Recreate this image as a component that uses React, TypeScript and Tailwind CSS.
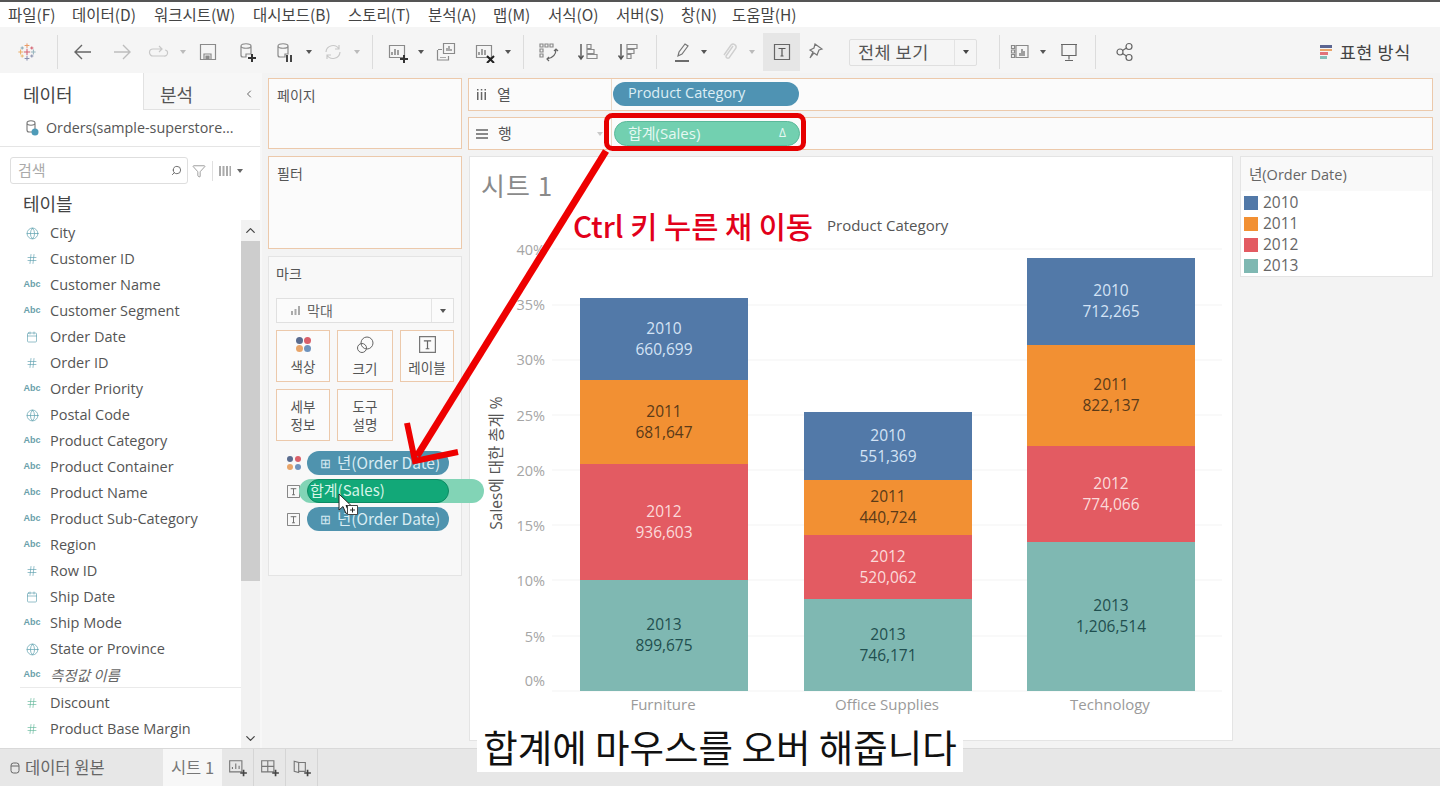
import React from "react";
import { Globe, Hash, Calendar, Search, Filter, ChevronLeft, ChevronUp, ChevronDown } from "lucide-react";

const KR = { fontFamily: '"Noto Sans CJK KR","Noto Sans",sans-serif' };
const kr = 'font-["Noto_Sans_CJK_KR",sans-serif]';
const os = 'font-["Open_Sans","Noto_Sans_CJK_KR",sans-serif]';

const menu: [string, number][] = [
  ["파일(F)", 64], ["데이터(D)", 82], ["워크시트(W)", 99], ["대시보드(B)", 95], ["스토리(T)", 80], ["분석(A)", 65],
  ["맵(M)", 55], ["서식(O)", 68], ["서버(S)", 65], ["창(N)", 51], ["도움말(H)", 80],
];

const G = "#8a8a8a";
const Svg = ({ children, w = 22, h = 22 }: { children: React.ReactNode; w?: number; h?: number }) => (
  <svg width={w} height={h} viewBox={`0 0 ${w} ${h}`} fill="none" stroke={G} strokeWidth="1.2">{children}</svg>
);
const Caret = ({ c = "#777" }: { c?: string }) => <div className="h-0 w-0 border-x-[3px] border-t-[4px] border-x-transparent" style={{ borderTopColor: c }} />;
const Slot = ({ w, children, className = "" }: { w: number; children?: React.ReactNode; className?: string }) => (
  <div className={"flex h-full shrink-0 items-center justify-center " + className} style={{ width: w }}>{children}</div>
);
const Sep = ({ w }: { w: number }) => <Slot w={w}><div className="h-[34px] w-px bg-[#dcdcdc]" /></Slot>;
const Bars = () => (<g stroke="#666"><path d="M6 14v-3M9 14V8M12 14v-5" /></g>);

const Logo = () => {
  const pts: [number, number, string, number][] = [
    [11, 3, "#e8762c", 3], [11, 19, "#5b6591", 3], [3, 11, "#eb912b", 3], [19, 11, "#7099a6", 3], [11, 11, "#c72035", 4],
    [5, 6, "#59879b", 2], [17, 6, "#c72035", 2], [5, 16, "#e8a33a", 2], [17, 16, "#5b6591", 2],
  ];
  return (
    <div className="scale-[0.8] opacity-70">
      <Svg>
        {pts.map(([x, y, c, s], i) => (
          <path key={i} d={`M${x - s} ${y}h${2 * s}M${x} ${y - s}v${2 * s}`} stroke={c} strokeWidth="1.3" />
        ))}
      </Svg>
    </div>
  );
};

function Toolbar() {
  return (
    <div className="flex h-[46px] items-center bg-[#f5f5f5] pt-[4px]">
      <Slot w={54}><Logo /></Slot>
      <Sep w={6} />
      <Slot w={46}><Svg><path d="M19 11H3M10 4l-7 7 7 7" stroke="#666" strokeWidth="1.4" /></Svg></Slot>
      <Slot w={32}><Svg><path d="M3 11h16M12 4l7 7-7 7" stroke="#bdbdbd" strokeWidth="1.4" /></Svg></Slot>
      <Slot w={40}><Svg><path d="M15 8H6a3 3 0 0 0 0 7h11a3 3 0 0 0 1-6M12 5l3 3-3 3" stroke="#c8c8c8" /></Svg></Slot>
      <Slot w={10}><Caret c="#bbb" /></Slot>
      <Slot w={40}><Svg><path d="M3.500 3.500h15v15h-15zM7 18v-5h7v5" /><path d="M9 15h3v3H9z" fill={G} /></Svg></Slot>
      <Slot w={40}><Svg><path d="M4 5c0-3 10-3 10 0v8H9v3H6c-2 0-2-1-2-2zM4 5c0 3 10 3 10 0" /><path d="M11 17h8M15 13v8" stroke="#333" strokeWidth="2" /></Svg></Slot>
      <Slot w={34}><Svg><path d="M4 5c0-3 10-3 10 0v8h-3v3H6c-2 0-2-1-2-2zM4 5c0 3 10 3 10 0" /><path d="M13 14v7M17 14v7" stroke="#444" strokeWidth="2" /></Svg></Slot>
      <Slot w={14}><Caret c="#555" /></Slot>
      <Slot w={34}><Svg><path d="M4 11a7 7 0 0 1 13-3M18 11a7 7 0 0 1-13 3M17 4v4h-4M5 18v-4h4" stroke="#c8c8c8" /></Svg></Slot>
      <Slot w={14}><Caret c="#bbb" /></Slot>
      <Sep w={16} />
      <Slot w={34}><Svg><path d="M3.500 4.500h15v12h-15z" /><Bars /><path d="M14 18h8M18 14v8" stroke="#333" strokeWidth="2" /></Svg></Slot>
      <Slot w={14}><Caret c="#555" /></Slot>
      <Slot w={36}><Svg><path d="M8.500 2.500h11v10h-11z" /><path d="M3 8.500H7M2.500 9v10h11v-4" /><path d="M12 10V7M14 10V5M16 10V8M6 17v-1M8 17v-1M10 17v-1" stroke="#777" /></Svg></Slot>
      <Slot w={40}><Svg><path d="M3.500 4.500h15v12h-15z" /><Bars /><path d="M14 15l7 7M21 15l-7 7" stroke="#222" strokeWidth="2" /></Svg></Slot>
      <Slot w={8}><Caret c="#555" /></Slot>
      <Sep w={22} />
      <Slot w={28}><Svg><path d="M3 3h3v3H3zM8 3h3v3H8zM13 3h3v3h-3zM3 8h3v3H3zM3 13h3v3H3z" /><path d="M19 8c0 6-3 9-9 10M17 10l2-2 2 2M12 16l-2 2 2 2" stroke="#666" /></Svg></Slot>
      <Slot w={52}><Svg><path d="M4 3v14M1.500 14.500L4 18l2.500-3.500" stroke="#555" strokeWidth="1.4" /><path d="M10 3.500h4v4h-4zM10 8.500h7v4h-7zM10 13.500h10v4H10z" /></Svg></Slot>
      <Slot w={28}><Svg><path d="M4 3v14M1.500 14.500L4 18l2.500-3.500" stroke="#555" strokeWidth="1.4" /><path d="M10 3.500h10v4H10zM10 8.500h7v4h-7zM10 13.500h4v4h-4z" /></Svg></Slot>
      <Sep w={28} />
      <Slot w={24}><Svg><path d="M7 15l1-4 6-8 3 2-6 8zM4 20h14" stroke="#777" /><path d="M4 20h14" stroke="#555" strokeWidth="1.5" /></Svg></Slot>
      <Slot w={20}><Caret c="#555" /></Slot>
      <Slot w={30}><Svg><path d="M15 5l-7 10a2 2 0 0 0 3 2l7-10a3 3 0 0 0-5-3L6 14" stroke="#cfcfcf" strokeWidth="1.4" /></Svg></Slot>
      <Slot w={16}><Caret c="#bbb" /></Slot>
      <Slot w={37} className="ml-[3px]">
        <div className="flex h-[38px] w-[37px] items-center justify-center bg-[#e6e6e6]">
          <Svg w={18} h={18}><path d="M1.500 1.500h15v15h-15z" stroke="#666" /><path d="M5.500 5.500h7M9 5.500v7.500M7.500 13h3" stroke="#555" /></Svg>
        </div>
      </Slot>
      <Slot w={34}><Svg w={18} h={20}><path d="M7 2l7 5-3 1-2 5-3-2-4 5 3-6-3-2 4-2z" stroke="#777" /></Svg></Slot>
      <div className={`ml-[15px] flex h-[27px] w-[128px] shrink-0 items-center rounded-[2px] border border-[#dfdfdf] ${kr}`}>
        <div className="flex-1 pl-[8px] text-[17.500px] tracking-[0.5px] text-[#555]">전체 보기</div>
        <div className="flex h-full w-[22px] items-center justify-center border-l border-[#e3e3e3]"><Caret c="#444" /></div>
      </div>
      <div className="ml-[14px]"><Sep w={16} /></div>
      <Slot w={26}><Svg><path d="M2.500 4.500h3v3h-3zM2.500 9h3v3h-3zM2.500 13.500h3v3h-3zM7 4.500h12v12H7z" /><path d="M11 15v-3M13 15V8M15 15v-5" stroke="#666" /></Svg></Slot>
      <Slot w={20}><Caret c="#555" /></Slot>
      <Slot w={32}><Svg><path d="M3 3.500h16M4 3.500v11h14v-11M11 14.500v4M7 19.500h8" stroke="#666" /></Svg></Slot>
      <Sep w={20} />
      <Slot w={40}><Svg><circle cx="6" cy="11" r="3" stroke="#666" /><circle cx="15" cy="5.500" r="3" stroke="#666" /><circle cx="15" cy="16.500" r="3" stroke="#666" /><path d="M8.500 9.500l4-2.500M8.500 12.500l4 2.500" stroke="#666" /></Svg></Slot>
      <div className={`ml-auto mr-[29px] flex items-center gap-[8px] ${kr}`}>
        <div className="flex w-[12px] flex-col gap-px">
          <div className="h-[3px] w-[12px] bg-[#5b6591]" />
          <div className="h-[2px] w-[12px] bg-[#e8a56a]" />
          <div className="h-[3px] w-[8px] bg-[#e2737a]" />
          <div className="h-[3px] w-[7px] bg-[#86bdb8]" />
        </div>
        <span className="text-[17.500px] tracking-[0.6px] text-[#444]">표현 방식</span>
      </div>
    </div>
  );
}

type Kind = "g" | "h" | "a" | "c";
const fields: [Kind, string][] = [
  ["g", "City"], ["h", "Customer ID"], ["a", "Customer Name"], ["a", "Customer Segment"], ["c", "Order Date"], ["h", "Order ID"],
  ["a", "Order Priority"], ["g", "Postal Code"], ["a", "Product Category"], ["a", "Product Container"], ["a", "Product Name"],
  ["a", "Product Sub-Category"], ["a", "Region"], ["h", "Row ID"], ["c", "Ship Date"], ["a", "Ship Mode"], ["g", "State or Province"],
];

const FieldIcon = ({ k, green }: { k: Kind; green?: boolean }) => {
  const c = green ? "#63b89a" : "#5d9fae";
  return (
    <div className="flex w-[20px] justify-center">
      {k === "g" && <Globe size={13} color={c} strokeWidth={1.3} />}
      {k === "h" && <Hash size={12} color={c} strokeWidth={1.3} />}
      {k === "c" && <Calendar size={12} color={c} strokeWidth={1.3} />}
      {k === "a" && <span className="font-['Liberation_Sans',sans-serif] text-[9px] font-bold text-[#6aa0aa]">Abc</span>}
    </div>
  );
};

const Field = ({ k, name, green }: { k: Kind; name: string; green?: boolean }) => (
  <div className="flex h-[26px] items-center pl-[22px]">
    <FieldIcon k={k} green={green} />
    <span className={`ml-[8px] text-[14.500px] text-[#555] ${os}`}>{name}</span>
  </div>
);

function Sidebar() {
  return (
    <div className="flex w-[262px] shrink-0 flex-col border-r-2 border-[#f7f7f7] bg-white">
      <div className={`flex h-[37px] text-[18px] text-[#444] ${kr}`}>
        <div className="flex w-[143px] items-center pl-[23px] pt-[6px]">데이터</div>
        <div className="flex flex-1 items-center justify-between border-b border-l border-[#e2e2e2] bg-[#f7f7f7] pl-[16px] pr-[5px] pt-[6px] text-[#555]">
          분석
          <ChevronLeft size={12} color="#666" />
        </div>
      </div>
      <div className={`flex h-[37px] items-center border-b border-[#e5e5e5] pl-[24px] text-[14.300px] text-[#555] ${os}`}>
        <svg width="18" height="18" viewBox="0 0 18 18" fill="none" className="mr-[4px]">
          <path d="M3 4c0-3 8-3 8 0v9H5c-1 0-2-1-2-2zM3 4c0 3 8 3 8 0" stroke="#777" strokeWidth="1.100" />
          <circle cx="11" cy="13" r="3.500" fill="#4e9bb8" />
        </svg>
        Orders(sample-superstore...
      </div>
      <div className="flex items-center pl-[10px] pt-[10px]">
        <div className={`flex h-[27px] w-[178px] items-center justify-between rounded-[3px] border border-[#dedede] pl-[7px] pr-[5px] text-[15px] text-[#aaa] ${kr}`}>
          검색
          <Search size={11} color="#666" className="-scale-x-100" />
        </div>
        <Filter size={14} color="#777" strokeWidth={1.2} className="ml-[4px]" />
        <div className="ml-[6px] h-[20px] w-px bg-[#e0e0e0]" />
        <svg width="12" height="10" viewBox="0 0 12 10" className="ml-[6px]"><path d="M0 0h2v10H0zM3.500 0h2v10h-2zM7 0h2v10H7zM10.500 0h1.500v10h-1.500z" fill="#aaa" /></svg>
        <div className="ml-[6px]"><Caret c="#666" /></div>
      </div>
      <div className={`flex h-[36px] items-center pl-[23px] pt-[2px] text-[18px] text-[#444] ${kr}`}>테이블</div>
      <div className="flex min-h-0 flex-1">
        <div className="w-[241px] overflow-hidden">
          {fields.map(([k, n]) => <Field key={n} k={k} name={n} />)}
          <div className="flex h-[25px] items-center pl-[22px]">
            <FieldIcon k="a" />
            <span className={`ml-[8px] text-[14.500px] italic text-[#666] ${kr}`}>측정값 이름</span>
          </div>
          <div className="mb-[2px] ml-[20px] h-px bg-[#eaeaea]" />
          <Field k="h" name="Discount" green />
          <Field k="h" name="Product Base Margin" green />
        </div>
        <div className="flex w-[19px] flex-col bg-[#f2f2f2]">
          <div className="flex h-[21px] items-center justify-center"><ChevronUp size={15} color="#444" strokeWidth={2} /></div>
          <div className="h-[340px] bg-[#cdcdcd]" />
          <div className="flex-1" />
          <div className="flex h-[20px] items-center justify-center"><ChevronDown size={15} color="#444" strokeWidth={2} /></div>
        </div>
      </div>
    </div>
  );
}

const Swatch = ({ big }: { big?: boolean }) => {
  const d = big ? "h-[7px] w-[7px]" : "h-[6px] w-[6px]";
  return (
    <div className={big ? "grid grid-cols-2 gap-[1px]" : "grid grid-cols-2 gap-[2px]"}>
      <div className={`${d} rounded-full bg-[#5a6c8f]`} />
      <div className={`${d} rounded-full bg-[#d9606a]`} />
      <div className={`${d} rounded-full bg-[#e8a56a]`} />
      <div className={`${d} rounded-full bg-[#6f93bd]`} />
    </div>
  );
};
const TBox = ({ s = 13 }: { s?: number }) => (
  <svg width={s} height={s} viewBox="0 0 14 14" fill="none"><path d="M.500.500h13v13H.500z" stroke="#777" /><path d="M4 4h6M7 4v6.500M5.500 10.500h3" stroke="#666" /></svg>
);

const MarkBtn = ({ w, children }: { w: number; children: React.ReactNode }) => (
  <div className={`flex h-[52px] shrink-0 flex-col items-center justify-center border border-[#ecc9ab] bg-[#fbfbfb] text-[13.500px] leading-[18px] text-[#555] ${kr}`} style={{ width: w }}>{children}</div>
);

const Pill = ({ color, children, className = "" }: { color: string; children: React.ReactNode; className?: string }) => (
  <div className={`flex h-[24px] items-center rounded-full text-[#d8ecf3] ${className}`} style={{ backgroundColor: color }}>{children}</div>
);

function MarksPanel() {
  return (
    <div className="flex w-[194px] shrink-0 flex-col gap-[7px]">
      <div className={`h-[71px] border border-[#ecc9ab] bg-[#fbfbfb] px-[8px] pt-[6px] text-[14px] text-[#555] ${kr}`}>페이지</div>
      <div className={`h-[93px] border border-[#ecc9ab] bg-[#fbfbfb] px-[8px] pt-[6px] text-[14px] text-[#555] ${kr}`}>필터</div>
      <div className={`h-[320px] border border-[#e4e4e4] bg-[#f8f8f8] px-[7px] pt-[6px] ${kr}`}>
        <div className="text-[14px] leading-[21px] text-[#555]">마크</div>
        <div className="mt-[14px] flex h-[25px] items-center justify-between border border-[#e0e0e0] bg-[#fbfbfb] text-[14px] text-[#666]">
          <div className="flex items-center gap-[7px] pl-[14px]">
            <svg width="9" height="9" viewBox="0 0 9 9"><path d="M0 5h2v4H0zM3.500 3h2v6h-2zM7 0h2v9H7z" fill="#aaa" /></svg>
            막대
          </div>
          <div className="flex h-full w-[22px] items-center justify-center border-l border-[#e4e4e4]"><Caret c="#555" /></div>
        </div>
        <div className="mt-[7px] flex justify-between">
          <MarkBtn w={54}><div className="mb-[5px]"><Swatch big /></div>색상</MarkBtn>
          <MarkBtn w={56}>
            <svg width="18" height="18" viewBox="0 0 18 18" fill="none" className="mb-[5px]"><circle cx="11" cy="7" r="6" stroke="#666" /><circle cx="6" cy="12" r="4.500" stroke="#666" /></svg>
            크기
          </MarkBtn>
          <MarkBtn w={54}><div className="mb-[5px]"><TBox s={17} /></div>레이블</MarkBtn>
        </div>
        <div className="mt-[7px] flex gap-[7px]">
          <MarkBtn w={54}>세부<br />정보</MarkBtn>
          <MarkBtn w={56}>도구<br />설명</MarkBtn>
        </div>
        <div className="mt-[10px] flex flex-col gap-[4px]">
          <div className="flex items-center">
            <div className="flex w-[31px] justify-center pl-[4px]"><Swatch /></div>
            <Pill color="#4f93ae" className="w-[142px] pl-[13px] text-[15.500px]">
              <span className="mr-[6px] text-[13px]">⊞</span>년(Order Date)
            </Pill>
          </div>
          <div className="relative flex items-center">
            <div className="flex w-[31px] justify-center pl-[4px]"><TBox /></div>
            <div className="absolute left-[23px] top-0 h-[24px] w-[185px] rounded-full bg-[#82d4b6]" />
            <Pill color="#12a878" className="relative w-[142px] border border-[#0d8a63]" ><span /></Pill>
            <span className="absolute left-[34px] top-[0px] text-[15px] text-[#d6f5e8]">합계(Sales)</span>
          </div>
          <div className="flex items-center">
            <div className="flex w-[31px] justify-center pl-[4px]"><TBox /></div>
            <Pill color="#4f93ae" className="w-[142px] pl-[13px] text-[15.500px]">
              <span className="mr-[6px] text-[13px]">⊞</span>년(Order Date)
            </Pill>
          </div>
        </div>
      </div>
    </div>
  );
}

const C = { b: "#5279a8", o: "#f29033", r: "#e35b62", t: "#7fb8b2" };
const T = { b: "#d4e3f5", o: "#5a3a18", r: "#fbdada", t: "#1f4f4f" };
type Seg = [number, number, keyof typeof C, string];
const bars: { x: number; name: string; segs: Seg[] }[] = [
  { x: 580, name: "Furniture", segs: [[298, 380, "b", "660,699"], [380, 464, "o", "681,647"], [464, 580, "r", "936,603"], [580, 691, "t", "899,675"]] },
  { x: 804, name: "Office Supplies", segs: [[412, 480, "b", "551,369"], [480, 535, "o", "440,724"], [535, 599, "r", "520,062"], [599, 691, "t", "746,171"]] },
  { x: 1027, name: "Technology", segs: [[258, 345, "b", "712,265"], [345, 446, "o", "822,137"], [446, 542, "r", "774,066"], [542, 691, "t", "1,206,514"]] },
];
const ticks = [[0, 691, 681], [5, 636, 637], [10, 580, 581], [15, 525, 526], [20, 470, 471], [25, 415, 416], [30, 360, 360], [35, 305, 305], [40, 249, 250]];
const years: Record<string, string> = { b: "2010", o: "2011", r: "2012", t: "2013" };

function Chart() {
  const ff = '"Open Sans","Noto Sans CJK KR",sans-serif';
  return (
    <div className="flex h-[585px] w-[764px] shrink-0 flex-col border border-[#e4e4e4] bg-white">
      <div className={`h-[59px] pl-[11px] pt-[8px] text-[26px] leading-[40px] tracking-[1px] text-[#8a8a8a] ${kr}`}>시트 1</div>
      <svg width="762" height="524" viewBox="470 216 762 524" fontFamily={ff}>
        <text x="827" y="231" fontSize="15" fill="#555">Product Category</text>
        {ticks.map(([p, y]) => <path key={p} d={`M552 ${y}H1222`} stroke="#f3f3f3" />)}
        {ticks.map(([p, , ty]) => <text key={p} x="545" y={ty + 5} textAnchor="end" fontSize="14.500" fill="#a5a5a5">{p}%</text>)}
        <text transform="translate(502 463) rotate(-90)" textAnchor="middle" fontSize="15.500" fill="#555">Sales에 대한 총계 %</text>
        {bars.map((b) => (
          <g key={b.name}>
            {b.segs.map(([y1, y2, c, v]) => {
              const cy = (y1 + y2) / 2;
              return (
                <g key={c}>
                  <rect x={b.x} y={y1} width="168" height={y2 - y1} fill={C[c]} />
                  <text x={b.x + 84} y={cy - 5.5} textAnchor="middle" fontSize="15.500" fill={T[c]}>{years[c]}</text>
                  <text x={b.x + 84} y={cy + 15.5} textAnchor="middle" fontSize="15.500" fill={T[c]}>{v}</text>
                </g>
              );
            })}
            <text x={b.x + 83} y="710" textAnchor="middle" fontSize="15" fill="#9a9a9a">{b.name}</text>
          </g>
        ))}
      </svg>
    </div>
  );
}

function Legend() {
  const items: [string, string][] = [["2010", C.b], ["2011", C.o], ["2012", C.r], ["2013", C.t]];
  return (
    <div className="ml-[7px] h-[121px] w-[193px] border border-[#e4e4e4] bg-white">
      <div className={`flex h-[34px] items-center bg-[#f9f9f9] pl-[8px] pt-[2px] text-[14.500px] text-[#666] ${os}`}>년(Order Date)</div>
      <div className="flex flex-col pl-[3px] pt-px">
        {items.map(([y, c]) => (
          <div key={y} className="flex h-[21px] items-center gap-[5px]">
            <div className="h-[14px] w-[14px]" style={{ backgroundColor: c }} />
            <span className={`text-[15.500px] text-[#666] ${os}`}>{y}</span>
          </div>
        ))}
      </div>
    </div>
  );
}

function Shelf({ label, icon, pill, caret }: { label: string; icon: React.ReactNode; pill: React.ReactNode; caret?: boolean }) {
  return (
    <div className="flex h-[33px] border border-[#ecc9ab] bg-[#fbfbfb]">
      <div className={`flex w-[143px] items-center gap-[10px] border-r border-[#ecd9c8] pl-[7px] text-[15px] text-[#555] ${kr}`}>
        {icon}{label}
        {caret && <div className="ml-auto mr-[8px]"><Caret c="#c9c9c9" /></div>}
      </div>
      {pill}
    </div>
  );
}

function Overlay() {
  return (
    <svg className="pointer-events-none absolute left-0 top-0" width="1440" height="786" viewBox="0 0 1440 786" fill="none">
      <rect x="606.500" y="115.500" width="197" height="33" rx="6" stroke="#e60000" strokeWidth="5" />
      <path d="M606 151L417 456" stroke="#ee0000" strokeWidth="7" />
      <path d="M407 423L415 461L458 452" stroke="#ee0000" strokeWidth="6" />
      <path d="M339 494v16l4-3.500 3 7 3-1.500-3-6.500h5z" fill="#fff" stroke="#222" />
      <path d="M347.500 505.500h10v9h-10z" fill="#fff" stroke="#444" />
      <path d="M350 510h5M352.500 507.500v5" stroke="#222" />
    </svg>
  );
}

export default function App() {
  return (
    <div className="relative flex h-[786px] w-[1440px] flex-col overflow-hidden bg-[#f3f3f3]" style={KR}>
      <div className="h-[2px] bg-[#555]" />
      <div className={`flex h-[25px] items-center bg-white pl-[8px] text-[15.500px] text-[#444] ${kr}`}>
        {menu.map(([m, w]) => <div key={m} className="shrink-0" style={{ width: w }}>{m}</div>)}
      </div>
      <Toolbar />
      <div className="flex min-h-0 flex-1">
        <Sidebar />
        <div className="ml-[6px] pt-[5px]"><MarksPanel /></div>
        <div className="ml-[6px] flex w-[965px] shrink-0 flex-col gap-[6px] pt-[5px]">
          <Shelf
            label="열"
            icon={<svg width="11" height="11" viewBox="0 0 11 11"><path d="M1 3h1.500v8H1zM1 0h1.500v1.500H1zM4.800 3h1.500v8H4.800zM4.800 0h1.500v1.500H4.800zM8.500 3H10v8H8.500zM8.500 0H10v1.500H8.500z" fill="#666" /></svg>}
            pill={<div className={`ml-px mt-[3px] flex h-[24px] w-[186px] items-center rounded-full bg-[#4f93b3] pb-[2px] pl-[15px] text-[14.500px] text-[#dceef5] ${os}`}>Product Category</div>}
          />
          <Shelf
            label="행"
            caret
            icon={<svg width="12" height="10" viewBox="0 0 12 10"><path d="M0 1h12M0 5h12M0 9h12" stroke="#666" strokeWidth="1.300" /></svg>}
            pill={<div className={`ml-[2px] mt-[3px] flex h-[25px] w-[186px] items-center justify-between rounded-full border border-[#5bb99a] bg-[#72d0b0] pb-[1px] pl-[13px] pr-[13px] text-[15px] text-[#e6f8f2] ${os}`}>합계(Sales)<span className="text-[12px]">Δ</span></div>}
          />
          <div className="ml-px flex">
            <Chart />
            <Legend />
          </div>
        </div>
      </div>
      <div className={`flex h-[38px] items-center border-t border-[#d9d9d9] bg-[#e7e7e7] text-[16.500px] text-[#666] ${kr}`}>
        <div className="flex w-[163px] items-center gap-[5px] pl-[10px]">
          <svg width="10" height="12" viewBox="0 0 10 12" fill="none"><rect x="1" y="1" width="8" height="10" rx="2.500" stroke="#666" /><path d="M1 4h8" stroke="#666" /></svg>
          데이터 원본
        </div>
        <div className="flex h-full w-[59px] items-center justify-center bg-[#f7f7f7] text-[#777]">시트 1</div>
        {[
          <path key="a" d="M1.500 2.500h11v10h-11zM4 10V8M7 10V5M10 10V7" stroke="#777" />,
          <path key="b" d="M1.500 2.500h11v10h-11zM7 2.500v10M1.500 7.500h11" stroke="#777" />,
          <path key="c" d="M2 3l4 1v9l-4-1zM6 4h6v8H6" stroke="#777" />,
        ].map((p, i) => (
          <div key={i} className="flex h-full w-[32px] items-center justify-center border-r border-[#d5d5d5]">
            <svg width="20" height="20" viewBox="0 0 18 18" fill="none">{p}<path d="M11 13.500h6M14 10.500v6" stroke="#444" strokeWidth="1.500" /></svg>
          </div>
        ))}
      </div>
      <div className={`absolute left-[573px] top-[207px] whitespace-nowrap text-[29.500px] font-medium leading-[36px] text-[#e2001a] ${kr}`}>Ctrl 키 누른 채 이동</div>
      <Overlay />
      <div className={`absolute left-[477px] top-[727px] flex h-[45px] w-[486px] items-center justify-center whitespace-nowrap bg-white pb-[6px] text-[37.500px] text-[#111] ${kr}`}>합계에 마우스를 오버 해줍니다</div>
    </div>
  );
}
